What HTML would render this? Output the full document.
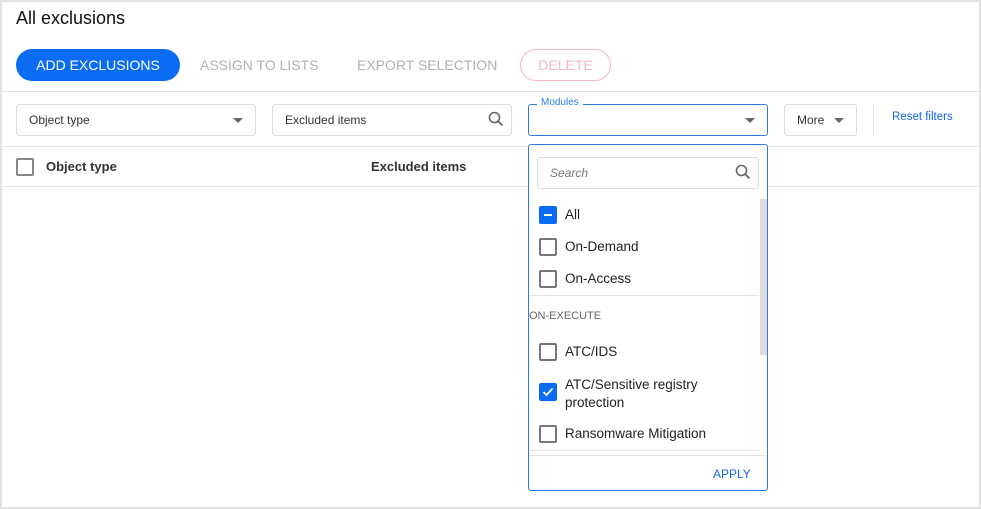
<!DOCTYPE html>
<html><head><style>
*{box-sizing:border-box;margin:0;padding:0}
body{width:981px;height:509px;background:#fff;font-family:"Liberation Sans",sans-serif;position:relative;overflow:hidden;color:#222}
.frame{position:absolute;left:0;top:0;width:981px;height:509px;border:2px solid #e2e2e2}
.a{position:absolute}
.btn{position:absolute;top:49px;height:32px;line-height:32px;font-size:14px;color:#b0b0b0}
.field{position:absolute;top:104px;height:32px;border:1px solid #dcdcdc;border-radius:3px;font-size:12px;color:#333;line-height:30px;padding-left:12px}
.tri{position:absolute;width:0;height:0;border-left:5px solid transparent;border-right:5px solid transparent;border-top:5px solid #666}
.cb{position:absolute;left:539px;width:18px;height:18px;border:2px solid #777;border-radius:2px}
.lbl{position:absolute;left:565px;font-size:13.5px;color:#222}
.hl{position:absolute;height:1px;background:#e2e2e2}
</style></head><body>
<div class="frame"></div>
<div class="a" style="left:16px;top:8px;font-size:18px;color:#111">All exclusions</div>
<div class="btn" style="left:16px;width:164px;background:#0a6cf3;color:#fff;border-radius:16px;text-align:center">ADD EXCLUSIONS</div>
<div class="btn" style="left:200px">ASSIGN TO LISTS</div>
<div class="btn" style="left:357px">EXPORT SELECTION</div>
<div class="btn" style="left:520px;width:91px;border:1px solid #f3b8bd;border-radius:16px;color:#f3b8bd;text-align:center;line-height:30px">DELETE</div>
<div class="hl" style="left:2px;width:977px;top:91px"></div>
<div class="field" style="left:16px;width:240px">Object type</div>
<div class="tri" style="left:233px;top:118px"></div>
<div class="field" style="left:272px;width:240px">Excluded items</div>
<svg class="a" style="left:488px;top:111px" width="16" height="16" viewBox="0 0 16 16"><circle cx="6.5" cy="6.5" r="5" fill="none" stroke="#666" stroke-width="1.6"/><path d="M10 10l4.5 4.5" stroke="#666" stroke-width="1.8"/></svg>
<div class="field" style="left:528px;width:240px;border-color:#2a7fdc"></div>
<div class="a" style="left:537px;top:97px;background:#fff;padding:0 4px;font-size:10px;color:#2a7fdc">Modules</div>
<div class="tri" style="left:745px;top:118px"></div>
<div class="field" style="left:784px;width:73px">More</div>
<div class="tri" style="left:834px;top:118px"></div>
<div class="a" style="left:873px;top:104px;width:1px;height:32px;background:#e2e2e2"></div>
<div class="a" style="left:892px;top:111px;font-size:11.5px;color:#1565e0">Reset filters</div>
<div class="hl" style="left:2px;width:977px;top:146px"></div>
<div class="a" style="left:16px;top:158px;width:18px;height:18px;border:2px solid #888;border-radius:2px"></div>
<div class="a" style="left:46px;top:159px;font-size:13px;font-weight:bold;color:#333">Object type</div>
<div class="a" style="left:371px;top:159px;font-size:13px;font-weight:bold;color:#333">Excluded items</div>
<div class="hl" style="left:2px;width:977px;top:186px"></div>
<div class="a" style="left:528px;top:144px;width:240px;height:347px;background:#fff;border:1px solid #2a7fdc;border-radius:3px"></div>
<div class="a" style="left:537px;top:157px;width:222px;height:32px;border:1px solid #dcdcdc;border-radius:3px;font-size:12px;font-style:italic;color:#777;line-height:30px;padding-left:12px">Search</div>
<svg class="a" style="left:735px;top:164px" width="16" height="16" viewBox="0 0 16 16"><circle cx="6.5" cy="6.5" r="5" fill="none" stroke="#666" stroke-width="1.6"/><path d="M10 10l4.5 4.5" stroke="#666" stroke-width="1.8"/></svg>
<div class="a" style="left:760px;top:199px;width:7px;height:156px;background:#dcdcdc"></div>
<div class="cb" style="left:539px;top:206px;background:#0a6cf3;border-color:#0a6cf3"><div style="position:absolute;left:3px;top:6px;width:8px;height:2px;background:#fff"></div></div>
<div class="lbl" style="top:207px">All</div>
<div class="cb" style="top:238px"></div><div class="lbl" style="top:239px">On-Demand</div>
<div class="cb" style="top:270px"></div><div class="lbl" style="top:271px">On-Access</div>
<div class="hl" style="left:529px;width:230px;top:295px"></div>
<div class="a" style="left:529px;top:310px;font-size:11px;color:#666">ON-EXECUTE</div>
<div class="cb" style="top:343px"></div><div class="lbl" style="top:344px">ATC/IDS</div>
<div class="cb" style="top:383px;background:#0a6cf3;border-color:#0a6cf3"><svg style="position:absolute;left:1px;top:1px" width="12" height="12" viewBox="0 0 12 12"><path d="M1.5 6l3 3 6-6.5" fill="none" stroke="#fff" stroke-width="1.8"/></svg></div>
<div class="lbl" style="top:376px;line-height:18px">ATC/Sensitive registry<br>protection</div>
<div class="cb" style="top:425px"></div><div class="lbl" style="top:426px">Ransomware Mitigation</div>
<div class="hl" style="left:529px;width:230px;top:450px"></div>
<div class="hl" style="left:529px;width:238px;top:455px"></div>
<div class="a" style="left:713px;top:467px;font-size:12px;color:#1565e0">APPLY</div>
</body></html>
